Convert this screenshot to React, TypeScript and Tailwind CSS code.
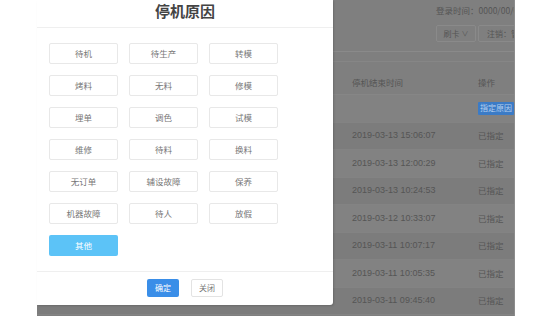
import React from "react";

const reasons = [
  "待机", "待生产", "转模",
  "烤料", "无料", "修模",
  "埋单", "调色", "试模",
  "维修", "待料", "换料",
  "无订单", "辅设故障", "保养",
  "机器故障", "待人", "放假",
];

const rows = [
  "",
  "2019-03-13 15:06:07",
  "2019-03-13 12:00:29",
  "2019-03-13 10:24:53",
  "2019-03-12 10:33:07",
  "2019-03-11 10:07:17",
  "2019-03-11 10:05:35",
  "2019-03-11 09:45:40",
];

export default function App() {
  return (
    <div
      className="relative w-[554px] h-[318px] bg-white overflow-hidden"
      style={{ fontFamily: '"Noto Sans CJK SC", "Noto Sans", sans-serif' }}
    >
      <div className="flex h-[316px]">
        <div className="w-[37px] shrink-0 bg-white" />
        {/* dimmed page */}
        <div className="w-[478px] shrink-0 h-full bg-[#7f7f7f] overflow-hidden border-r border-[#8c8c8c] text-[#555]">
          <div className="flex flex-col">
            <div className="h-[20px] flex items-center pl-[399px] text-[8.5px] whitespace-nowrap">
              登录时间：0000/00/00 00:00
            </div>
            <div className="h-[25px] flex items-start pl-[399px] gap-[2px] pt-[5px]">
              <div className="h-[17px] w-[40px] shrink-0 border border-[#8a8a8a] rounded-[2px] flex items-center justify-center text-[8px] gap-[2px]">
                <span>刷卡</span>
                <span className="text-[7px]">∨</span>
              </div>
              <div className="h-[17px] w-[60px] shrink-0 border border-[#8a8a8a] rounded-[2px] flex items-center pl-[8px] text-[8px] whitespace-nowrap">
                注销：管理员
              </div>
            </div>
            <div className="h-[7px] border-b border-[#8a8a8a]" />
            <div className="h-[10px] border-b border-[#868686]" />
            <div className="h-[33px] flex pt-[14px] text-[8.5px] leading-[12px] border-b border-[#868686]">
              <div className="w-[315px] shrink-0" />
              <div className="w-[126px] shrink-0">停机结束时间</div>
              <div>操作</div>
            </div>
            {rows.map((r, i) => (
              <div
                key={i}
                className={`h-[27.5px] flex items-center text-[8.5px] border-b border-[#838383] ${
                  i % 2 === 0 ? "bg-[#828282]" : "bg-[#7c7c7c]"
                }`}
              >
                <div className="w-[315px] shrink-0" />
                <div
                  className="w-[126px] shrink-0 whitespace-nowrap text-[9px]"
                  style={{ fontFamily: '"Liberation Sans", Arial, sans-serif' }}
                >
                  {r}
                </div>
                {i === 0 ? (
                  <div className="h-[13px] w-[36px] bg-[#3b7bc6] rounded-[1px] text-[8px] text-[#b5d0ee] flex items-center justify-center whitespace-nowrap">
                    指定原因
                  </div>
                ) : (
                  <div>已指定</div>
                )}
              </div>
            ))}
          </div>
        </div>
        <div className="flex-1 bg-white" />
      </div>

      {/* modal */}
      <div className="absolute left-[37px] top-0 w-[296px] h-[305px] bg-white rounded-br-[3px] shadow-[1px_1px_2px_rgba(0,0,0,0.15)] flex flex-col">
        <div className="h-[28px] border-b border-[#efefef] flex items-center justify-center text-[15px] font-bold text-[#444] pb-[4px]">
          停机原因
        </div>
        <div className="pl-[12px] pt-[15px] grid grid-cols-[69px_69px_69px] gap-x-[11px] gap-y-[11px]">
          {reasons.map((r) => (
            <div
              key={r}
              className="h-[21px] border border-[#e8e8e8] rounded-[2px] flex items-center justify-center text-[8.5px] text-[#777]"
            >
              {r}
            </div>
          ))}
          <div className="h-[21px] bg-[#5cc3f7] rounded-[2px] flex items-center justify-center text-[8.5px] text-white">
            其他
          </div>
        </div>
        <div className="mt-[15px] border-t border-[#efefef] flex justify-center gap-[12px] pt-[7px]">
          <div className="h-[18px] w-[32px] bg-[#3a8ee8] rounded-[2px] text-white text-[8px] flex items-center justify-center">
            确定
          </div>
          <div className="h-[18px] w-[32px] border border-[#e3e3e3] rounded-[2px] text-[#777] text-[8px] flex items-center justify-center">
            关闭
          </div>
        </div>
      </div>
    </div>
  );
}
